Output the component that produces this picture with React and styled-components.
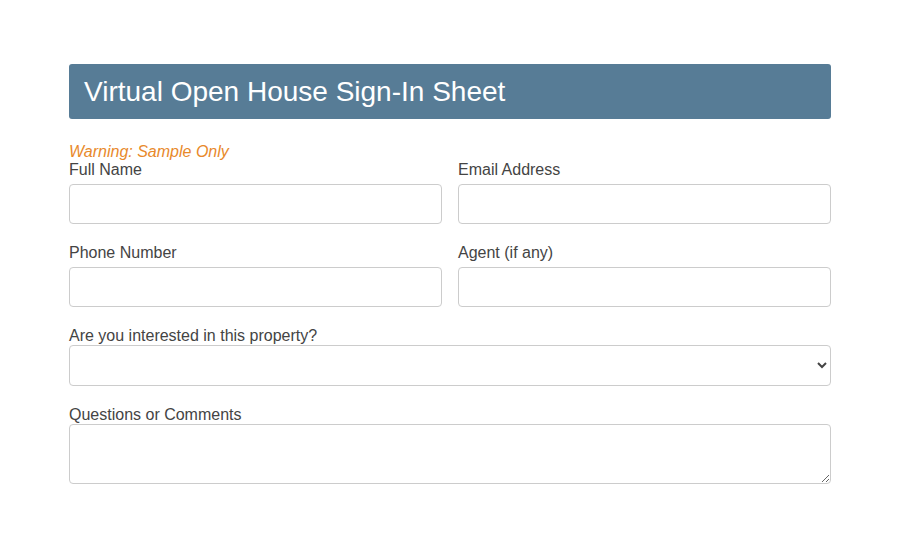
import React from "react";
import styled, { createGlobalStyle } from "styled-components";

const GlobalStyle = createGlobalStyle`
  html, body {
    margin: 0;
    padding: 0;
    background: #ffffff;
  }
  body {
    font-family: "Liberation Sans", Arial, sans-serif;
    color: #444444;
  }
`;

const Page = styled.div`
  width: 900px;
  height: 552px;
  padding-top: 64px;
  box-sizing: border-box;
`;

const Sheet = styled.div`
  width: 762px;
  margin-left: 69px;
`;

const Header = styled.div`
  height: 55px;
  background: #577c96;
  border-radius: 3px;
  display: flex;
  align-items: center;
  padding-left: 15px;
`;

const Title = styled.h1`
  margin: 0;
  font-size: 28px;
  font-weight: normal;
  color: #ffffff;
`;

const Warning = styled.div`
  margin-top: 24px;
  font-size: 16px;
  line-height: 18px;
  font-style: italic;
  color: #e8892b;
`;

const Row = styled.div`
  display: grid;
  grid-template-columns: 1fr 1fr;
  column-gap: 16px;
  margin-top: ${(p) => p.$top || 0}px;
`;

const Field = styled.div`
  display: flex;
  flex-direction: column;
  margin-top: ${(p) => p.$top || 0}px;
`;

const Label = styled.label`
  font-size: 16px;
  line-height: 18px;
  color: #444444;
  margin-bottom: ${(p) => (p.$tight ? 0 : 5)}px;
`;

const fieldBase = `
  box-sizing: border-box;
  width: 100%;
  border: 1px solid #cccccc;
  border-radius: 4px;
  background: #ffffff;
  font-family: "Liberation Sans", Arial, sans-serif;
  font-size: 16px;
  color: #444444;
  outline: none;
`;

const Input = styled.input`
  ${fieldBase}
  height: 40px;
  padding: 6px 10px;
`;

const Select = styled.select`
  ${fieldBase}
  height: 41px;
  padding: 6px 6px;
`;

const TextArea = styled.textarea`
  ${fieldBase}
  height: 60px;
  padding: 6px 10px;
  display: block;
`;

export default function App() {
  return (
    <>
      <GlobalStyle />
      <Page>
        <Sheet>
          <Header>
            <Title>Virtual Open House Sign-In Sheet</Title>
          </Header>
          <Warning>Warning: Sample Only</Warning>
          <Row>
            <Field>
              <Label>Full Name</Label>
              <Input type="text" />
            </Field>
            <Field>
              <Label>Email Address</Label>
              <Input type="email" />
            </Field>
          </Row>
          <Row $top={20}>
            <Field>
              <Label>Phone Number</Label>
              <Input type="tel" />
            </Field>
            <Field>
              <Label>Agent (if any)</Label>
              <Input type="text" />
            </Field>
          </Row>
          <Field $top={20}>
            <Label $tight>Are you interested in this property?</Label>
            <Select defaultValue="">
              <option value=""></option>
              <option value="yes">Yes</option>
              <option value="no">No</option>
              <option value="maybe">Maybe</option>
            </Select>
          </Field>
          <Field $top={20}>
            <Label $tight>Questions or Comments</Label>
            <TextArea />
          </Field>
        </Sheet>
      </Page>
    </>
  );
}
